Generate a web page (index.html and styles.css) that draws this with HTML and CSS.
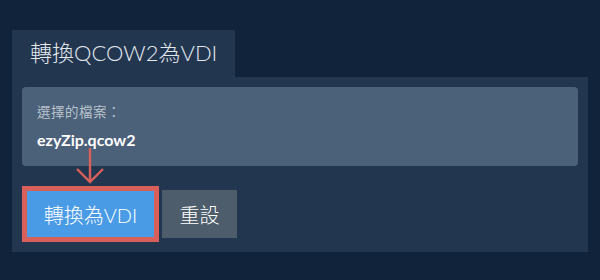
FILE: index.html
```html
<!DOCTYPE html>
<html lang="zh-Hant">
<head>
<meta charset="utf-8">
<link rel="stylesheet" href="styles.css">
</head>
<body>
<div class="page">
  <div class="tab">轉換QCOW2為VDI</div>
  <div class="panel">
    <div class="file-box">
      <div class="file-label">選擇的檔案：</div>
      <div class="file-name">ezyZip.qcow2</div>
    </div>
    <div class="actions">
      <div class="highlight">
        <button class="btn btn-primary">轉換為VDI</button>
      </div>
      <button class="btn btn-reset">重設</button>
    </div>
    <svg class="arrow" width="30" height="36" viewBox="0 0 30 36">
      <path d="M15 0 V34 M2 21 L15 34 L28 21" fill="none" stroke="#d9605a" stroke-width="2.4"/>
    </svg>
  </div>
</div>
</body>
</html>
```
FILE: styles.css
```css
html, body {
  margin: 0;
  padding: 0;
  background: #11233a;
  font-family: Lato, "Noto Sans CJK TC", sans-serif;
}
.page {
  padding: 30px 12px 0 12px;
  width: 576px;
}
.tab {
  width: 205px;
  height: 47px;
  padding-left: 18px;
  background: #223650;
  color: #e3e8ee;
  font-size: 22px;
  font-weight: 300;
  line-height: 46px;
}
.panel {
  position: relative;
  background: #223650;
  padding: 10px;
  height: 155px;
}
.file-box {
  background: #4b6079;
  border-radius: 4px;
  height: 79px;
  box-sizing: border-box;
  padding: 16px 15px 0 15px;
}
.file-label {
  color: #b9c3ce;
  font-size: 13.5px;
  line-height: 18px;
  letter-spacing: 0.5px;
}
.file-name {
  color: #ffffff;
  font-size: 16px;
  font-weight: 700;
  margin-top: 9px;
  line-height: 20px;
}
.actions {
  display: flex;
  align-items: center;
  gap: 3px;
  margin-top: 20px;
}
.highlight {
  border: 5px solid #d9605a;
}
.btn {
  border: none;
  font-family: Lato, "Noto Sans CJK TC", sans-serif;
  font-size: 20px;
  font-weight: 300;
  color: #ffffff;
  padding: 0;
  display: block;
}
.btn-primary {
  width: 127px;
  height: 46px;
  background: #4a9be6;
}
.btn-reset {
  width: 75px;
  height: 48px;
  background: #4d5d6c;
}
.arrow {
  position: absolute;
  left: 63px;
  top: 71px;
}
```
